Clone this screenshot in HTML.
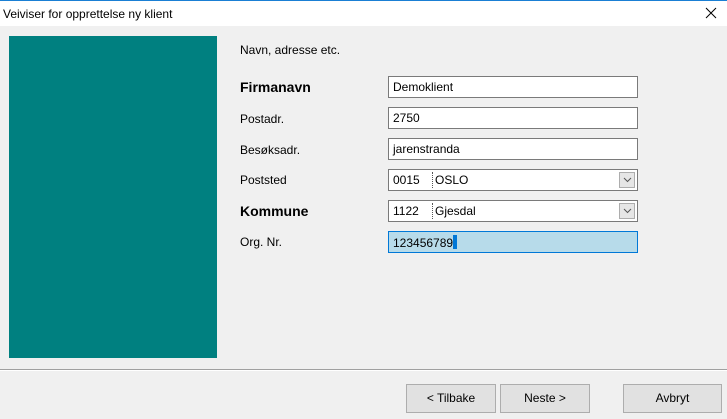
<!DOCTYPE html>
<html><head><style>
body{margin:0;width:727px;height:419px;background:#f0f0f0;font-family:"Liberation Sans",sans-serif;font-size:12px;color:#000;position:relative;overflow:hidden}
.a{position:absolute}
.title{left:0;top:0;width:727px;height:26px;background:#fff;border-top:1px solid #1a7fd4;box-sizing:border-box}
.lbl{left:240px}
.inp{left:388px;width:250px;height:22px;box-sizing:border-box;border:1px solid #7a7a7a;background:#fff;padding:3px 4px;font-size:12px}
.btn{height:29px;box-sizing:border-box;border:1px solid #adadad;background:#e1e1e1;text-align:center;line-height:27px;font-size:12px}
.dd{position:absolute;right:2px;top:2px;width:16px;height:16px;box-sizing:border-box;border:1px solid #adadad;background:#e6e6e6}
.dd svg{position:absolute;left:3px;top:4px}
.sep{position:absolute;left:43px;top:2px;height:16px;border-left:1px dotted #555}
</style></head><body>
<div class="a title"><span class="a" style="left:3px;top:6px">Veiviser for opprettelse ny klient</span>
<svg class="a" style="left:705px;top:6px" width="12" height="12"><path d="M1 1L11 11M11 1L1 11" stroke="#000" stroke-width="1"/></svg></div>
<div class="a" style="left:9px;top:36px;width:208px;height:322px;background:#008080"></div>
<div class="a lbl" style="top:43px">Navn, adresse etc.</div>
<div class="a lbl" style="top:79px;font-size:14px;font-weight:bold">Firmanavn</div>
<div class="a inp" style="top:76px">Demoklient</div>
<div class="a lbl" style="top:112px">Postadr.</div>
<div class="a inp" style="top:107px">2750</div>
<div class="a lbl" style="top:143px">Besøksadr.</div>
<div class="a inp" style="top:138px">jarenstranda</div>
<div class="a lbl" style="top:173px">Poststed</div>
<div class="a inp" style="top:169px">0015<span class="sep"></span><span class="a" style="left:46px;top:3px">OSLO</span><span class="dd"><svg width="9" height="6"><path d="M1 1L4.5 4.5L8 1" stroke="#555" fill="none"/></svg></span></div>
<div class="a lbl" style="top:203px;font-size:14px;font-weight:bold">Kommune</div>
<div class="a inp" style="top:200px">1122<span class="sep"></span><span class="a" style="left:46px;top:3px">Gjesdal</span><span class="dd"><svg width="9" height="6"><path d="M1 1L4.5 4.5L8 1" stroke="#555" fill="none"/></svg></span></div>
<div class="a lbl" style="top:235px">Org. Nr.</div>
<div class="a inp" style="top:231px;background:#b7dbea;border-color:#0078d7">123456789<span style="display:inline-block;width:4px;height:14px;background:#0078d7;vertical-align:-2px"></span></div>
<div class="a" style="left:0;top:369px;width:727px;border-top:1px solid #a0a0a0;border-bottom:1px solid #fff"></div>
<div class="a btn" style="left:406px;top:384px;width:90px">&lt; Tilbake</div>
<div class="a btn" style="left:500px;top:384px;width:90px">Neste &gt;</div>
<div class="a btn" style="left:623px;top:384px;width:99px">Avbryt</div>
</body></html>
